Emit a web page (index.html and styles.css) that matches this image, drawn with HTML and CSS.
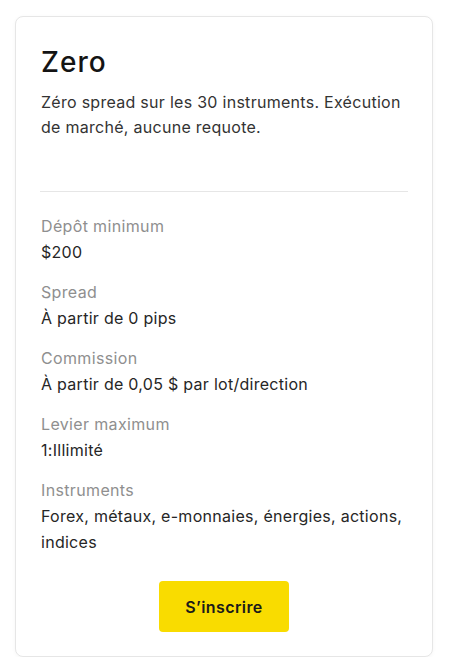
FILE: index.html
```html
<!DOCTYPE html>
<html lang="fr">
<head>
<meta charset="utf-8">
<title>Zero</title>
<link rel="stylesheet" href="styles.css">
</head>
<body>
<div class="card">
  <h1 class="title">Zero</h1>
  <p class="desc">Zéro spread sur les 30 instruments. Exécution de marché, aucune requote.</p>
  <div class="divider"></div>
  <dl class="specs">
    <div class="spec">
      <dt class="label">Dépôt minimum</dt>
      <dd class="value">$200</dd>
    </div>
    <div class="spec">
      <dt class="label">Spread</dt>
      <dd class="value">À partir de 0 pips</dd>
    </div>
    <div class="spec">
      <dt class="label">Commission</dt>
      <dd class="value">À partir de 0,05 $ par lot/direction</dd>
    </div>
    <div class="spec">
      <dt class="label">Levier maximum</dt>
      <dd class="value">1:Illimité</dd>
    </div>
    <div class="spec">
      <dt class="label">Instruments</dt>
      <dd class="value">Forex, métaux, e-monnaies, énergies, actions, indices</dd>
    </div>
  </dl>
  <div class="actions">
    <a class="btn" href="#">S’inscrire</a>
  </div>
</div>
</body>
</html>
```

FILE: styles.css
```css
html, body {
  margin: 0;
  padding: 0;
  background: #ffffff;
}
body {
  font-family: Inter, "Noto Sans", "Liberation Sans", sans-serif;
  color: #262626;
  padding: 16px 0 0 15px;
}
.card {
  box-sizing: border-box;
  width: 418px;
  height: 641px;
  border: 1px solid #e6e6e6;
  border-radius: 8px;
  background: #fff;
  box-shadow: 0 1px 4px rgba(0, 0, 0, 0.04);
  padding: 24px 24px 24px;
  display: flex;
  flex-direction: column;
}
.title {
  margin: 4px 0 0 1px;
  font-size: 28px;
  line-height: 34px;
  font-weight: 500;
  color: #141414;
  letter-spacing: 1px;
}
.desc {
  margin: 11px 0 0 1px;
  font-size: 16px;
  line-height: 25px;
  color: #333333;
  letter-spacing: 0.28px;
}
.divider {
  margin: 51px 0 0;
  height: 0;
  border-top: 1px solid #e6e6e6;
}
.specs {
  margin: 21px 0 0 1px;
  display: flex;
  flex-direction: column;
  gap: 14px;
}
.spec {
  display: flex;
  flex-direction: column;
}
.label {
  font-size: 16px;
  line-height: 26px;
  color: #8f8f8f;
  letter-spacing: 0.35px;
}
.value {
  margin: 0;
  font-size: 16px;
  line-height: 26px;
  color: #262626;
  letter-spacing: 0.28px;
}
.actions {
  margin-top: 26px;
  display: flex;
  justify-content: center;
}
.btn {
  width: 130px;
  height: 51px;
  display: flex;
  align-items: center;
  justify-content: center;
  background: #f9dc00;
  border-radius: 4px;
  color: #1a1a1a;
  font-weight: 600;
  font-size: 16px;
  letter-spacing: 0.4px;
  text-decoration: none;
}
```
